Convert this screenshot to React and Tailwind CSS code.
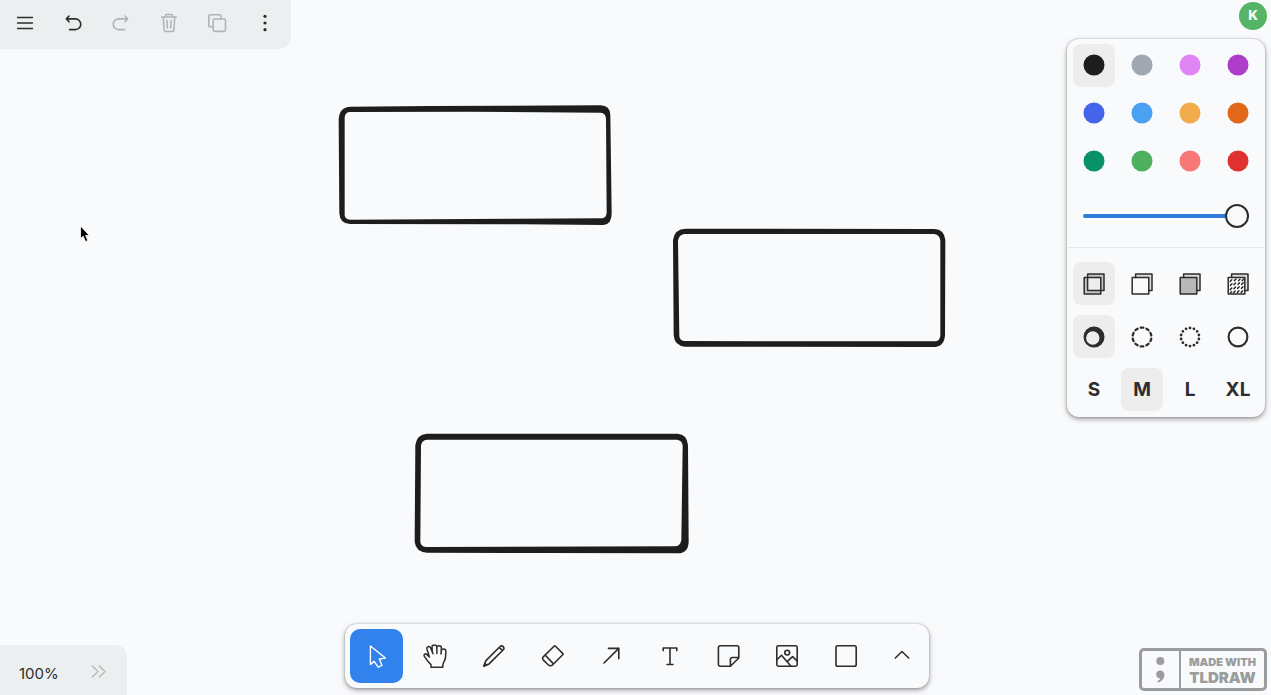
import React from "react";

const COLORS = [
  ["Black", "#1d1d1d"],
  ["Grey", "#9fa8b2"],
  ["Light violet", "#e085f4"],
  ["Violet", "#ae3ec9"],
  ["Blue", "#4465e9"],
  ["Light blue", "#4ba1f1"],
  ["Yellow", "#f1ac4b"],
  ["Orange", "#e16919"],
  ["Green", "#099268"],
  ["Light green", "#4cb05e"],
  ["Light red", "#f87777"],
  ["Red", "#e03131"],
];

function Icon({ children, width = 1.6 }) {
  return (
    <svg
      viewBox="0 0 24 24"
      className="size-6 shrink-0"
      fill="none"
      stroke="currentColor"
      strokeWidth={width}
      strokeLinecap="round"
      strokeLinejoin="round"
      aria-hidden="true"
    >
      {children}
    </svg>
  );
}

const UNDO = "M8 5 L5.4 7.9 L8 10.8 M5.6 7.9 H14.4 a5.3 5.3 0 0 1 0 10.7 H8.6";

const MENU = [
  ["Menu", false, <path strokeWidth="1.3" d="M4.5 6.5h15 M4.5 12h15 M4.5 17.5h15" />],
  ["Undo", false, <path d={UNDO} />],
  ["Redo", true, <path transform="matrix(-1 0 0 1 24 0)" d={UNDO} />],
  [
    "Delete",
    true,
    <path
      strokeWidth="1.5"
      d="M4.6 6h14.8 M8.6 6V4.6a1 1 0 0 1 1-1h4.8a1 1 0 0 1 1 1V6 M6.2 6l1 13.4a1.2 1.2 0 0 0 1.2 1.1h7.2a1.2 1.2 0 0 0 1.2-1.1L17.8 6 M9.9 9.6l.5 7.4 M14.1 9.6l-.5 7.4"
    />,
  ],
  [
    "Duplicate",
    true,
    <>
      <rect x="8.2" y="8" width="12.3" height="12.4" rx="1.6" />
      <path d="M8 15.8H5.3a1.5 1.5 0 0 1-1.5-1.5V5.3a1.5 1.5 0 0 1 1.5-1.5h9.2a1.5 1.5 0 0 1 1.5 1.5V7.8" />
    </>,
  ],
  [
    "More",
    false,
    <g fill="currentColor" stroke="none">
      <circle cx="12" cy="5.3" r="1.6" />
      <circle cx="12" cy="12" r="1.6" />
      <circle cx="12" cy="18.7" r="1.6" />
    </g>,
  ],
];

const TOOLS = [
  ["Select", <path d="M5.4 2 V20.4 L9.2 17.4 L13.2 23.2 L17 21.4 L14.4 15 L20.4 14 Z" strokeWidth="1.4" />],
  [
    "Hand",
    <path
      strokeWidth="1.5"
      d="M8 23.3 V20.6 C6 18.8 3.8 16.2 1.4 12.4 C.4 10.8 2.2 9 3.8 10.4 L6.4 13 L4 5.2 C3.3 2.6 6.6 1.6 7.6 4 L10 9.8 M9.4 8 L9 3 C9 .2 13.6 .2 13.8 3 L13.9 9.6 M13.8 3.6 C14 .9 18.4 1 18.4 3.9 L18 10 M18.4 6.4 C19.3 4.2 23 4.4 22.9 7.2 L22.5 13.6 C22.2 16.6 20 18.4 19.8 21 V23.3 H8"
    />,
  ],
  [
    "Draw",
    <>
      <path d="M2 21.9 L3.9 16.6 L18.1 2.5 C19 1.6 20.1 1.6 21.1 2.6 C22.2 3.7 22.2 4.9 21.3 5.8 L7.1 19.9 Z M17.3 3.4 L20.5 6.6" />
      <path d="M2 21.9 L2.8 19.4 L4.5 21.1 Z" fill="currentColor" />
    </>,
  ],
  [
    "Eraser",
    <path d="M14 2.2 a1 1 0 0 1 1.4 0 L22.7 9.4 a1 1 0 0 1 0 1.4 L13 20.5 C11.4 22.1 9.5 22.1 7.9 20.5 L3.7 16.4 C2.2 14.9 2.2 13.9 3.5 12.6 Z M5.3 11.2 L13.5 19.9" />,
  ],
  ["Arrow", <path d="M5 19 L19.8 4.4 M9.5 4.4 H19.8 V14.7" />],
  ["Text", <path d="M5.2 6.6 V4 H18.8 V6.6 M12 4 V20.5 M9 20.5 H15" />],
  [
    "Note",
    <path d="M22.8 13.4 V3.6 a1.8 1.8 0 0 0 -1.8 -1.8 H4.2 a1.8 1.8 0 0 0 -1.8 1.8 V20.4 a1.8 1.8 0 0 0 1.8 1.8 H14.4 L22.8 14 Z M22.600 13.5 H16.4 a2 2 0 0 0 -2 2 V22" />,
  ],
  [
    "Asset",
    <>
      <rect x="1.8" y="1.8" width="20.4" height="20.4" rx="1.6" />
      <circle cx="12.2" cy="8.6" r="2.4" />
      <path d="M2.1 15.5 L6.5 11.2 L15.8 22 M12.6 17.2 L17.6 12.6 L22 16.8" />
    </>,
  ],
  ["Rectangle", <rect x="2" y="1.8" width="20.2" height="20.4" rx="1.8" />],
];

const BACK = "M5.6 5.5 V2 H22 V18.6 H18.7";

const FILLS = [
  [
    "None",
    <>
      <path d="M2.2 5.5H5.6V2H22V18.6H18.8V22H2.2Z M5.6 5.5V18.6H18.8V5.5Z" fill="#c4c4c4" fillRule="evenodd" stroke="none" />
      <rect x="5.6" y="2" width="16.4" height="16.6" />
      <rect x="2.2" y="5.5" width="16.6" height="16.6" />
    </>,
  ],
  [
    "Semi",
    <>
      <path d="M5.6 5.5V2H22V18.6H18.8V5.5Z" fill="#dcdcdc" stroke="none" />
      <path d={BACK} />
      <rect x="2.2" y="5.5" width="16.6" height="16.6" />
    </>,
  ],
  [
    "Solid",
    <>
      <path d="M5.6 5.5V2H22V18.6H18.8V5.5Z" fill="#dcdcdc" stroke="none" />
      <path d={BACK} />
      <rect x="2.2" y="5.5" width="16.6" height="16.6" fill="#b8b8b8" />
    </>,
  ],
  [
    "Pattern",
    <>
      <path d="M5.6 5.5V2H22V18.6H18.8V5.5Z" fill="#dcdcdc" stroke="none" />
      <path d={BACK} />
      <rect x="2.2" y="5.5" width="16.6" height="16.6" fill="#fff" />
      <path
        strokeWidth="1.5"
        d="M4.2 9.4l1.6-1.6 M8.4 8.6l1.6-1.6 M12.4 8.800l1.600-1.600 M16.200 8.600l1.400-1.400 M4.400 13.400l1.600-1.600 M8 12.600l1.600-1.600 M12 12.400l1.600-1.600 M15.600 12.400l1.600-1.600 M4.200 17.600l1.600-1.600 M8 16.600l1.600-1.600 M11.600 16.400l1.600-1.600 M15.400 16.400l1.600-1.600 M4.400 21l1.200-1.200 M7.600 20.600l1.600-1.600 M11.400 20.400l1.600-1.600 M15.200 20.400l1.600-1.600"
      />
    </>,
  ],
];

const DASHES = [
  [
    "Draw",
    <path
      d="M12 1.5a10.5 10.5 0 1 0 0 21a10.5 10.5 0 1 0 0-21Z M10.8 6.300a6.700 6.700 0 1 1 0 13.400a6.700 6.700 0 1 1 0-13.400Z"
      fill="currentColor"
      fillRule="evenodd"
      stroke="none"
    />,
  ],
  [
    "Dashed",
    <circle cx="12" cy="12" r="9.4" strokeWidth="2.3" pathLength="100" strokeDasharray="4.5 5.5" strokeDashoffset="7.25" />,
  ],
  ["Dotted", <circle cx="12" cy="12" r="9.1" strokeWidth="2.8" pathLength="140" strokeDasharray="0 10" strokeDashoffset="5" />],
  ["Solid", <circle cx="12" cy="12" r="9.4" strokeWidth="2.1" />],
];

function OptionRow({ label, items, selected, height = "h-[53px]" }) {
  return (
    <div role="group" aria-label={label} className="grid grid-cols-4">
      {items.map(([name, content]) => (
        <div key={name} className={`flex items-center justify-center ${height}`}>
          <button
            type="button"
            aria-label={`${label}: ${name}`}
            aria-pressed={name === selected}
            className={`flex h-[43px] w-[42px] items-center justify-center rounded-lg ${name === selected ? "bg-[#ededed]" : ""}`}
          >
            {content}
          </button>
        </div>
      ))}
    </div>
  );
}

function StylePanel() {
  return (
    <section
      aria-label="Styles"
      className="mt-[9px] mr-1.5 w-[198px] rounded-xl bg-[#f9fafc] shadow-[0_0_2px_rgba(0,0,0,0.25),0_2px_4px_rgba(0,0,0,0.3),0_2px_8px_rgba(0,0,0,0.1)]"
    >
      <div className="border-b border-[#e8e9eb] px-[3px] pt-0.5">
        <OptionRow
          label="Color"
          selected="Black"
          height="h-12"
          items={COLORS.map(([name, color]) => [
            name,
            <Icon>
              <circle cx="12" cy="12" r="10.5" fill={color} stroke="none" />
            </Icon>,
          ])}
        />
        <div className="flex h-[62px] items-center px-[13px]">
          <input
            type="range"
            aria-label="Opacity"
            min="0"
            max="100"
            defaultValue="100"
            className="h-6 w-full appearance-none bg-transparent [&::-webkit-slider-runnable-track]:h-1 [&::-webkit-slider-runnable-track]:rounded-full [&::-webkit-slider-runnable-track]:bg-[#2f7adb] [&::-webkit-slider-thumb]:-mt-2.5 [&::-webkit-slider-thumb]:size-6 [&::-webkit-slider-thumb]:appearance-none [&::-webkit-slider-thumb]:rounded-full [&::-webkit-slider-thumb]:border-2 [&::-webkit-slider-thumb]:border-solid [&::-webkit-slider-thumb]:border-[#2d2d2d] [&::-webkit-slider-thumb]:bg-[#f9fafc]"
          />
        </div>
      </div>
      <div className="px-[3px] pt-[9px] pb-px">
        <OptionRow
          label="Fill"
          selected="None"
          items={FILLS.map(([name, art]) => [name, <Icon width={1.5}>{art}</Icon>])}
        />
        <OptionRow label="Dash" selected="Draw" items={DASHES.map(([name, art]) => [name, <Icon>{art}</Icon>])} />
        <OptionRow
          label="Size"
          selected="M"
          items={["S", "M", "L", "XL"].map((size) => [size, <span className="text-[19px] leading-6 font-bold">{size}</span>])}
        />
      </div>
    </section>
  );
}

function Canvas() {
  return (
    <div className="absolute inset-0 -z-10" aria-label="Canvas">
      <svg viewBox="0 0 870 420" className="absolute top-[95px] left-[330px] h-[140px] w-[290px]" fill="#1d1d1d" fillRule="evenodd">
        <path d="M62 35 L300 33 L520 32 L812 31 Q840 32 841 60 L845 355 Q845 389 820 390 L580 388 L60 387 Q30 387 28 355 L26 75 Q27 36 62 35Z M58 51 L420 50 L812 53 Q827 55 828 70 L830 352 Q829 368 818 370 L560 371 L60 374 Q45 373 44 360 L44 68 Q45 53 58 51Z" />
      </svg>
      <svg viewBox="0 0 870 405" className="absolute top-[220px] left-[665px] h-[135px] w-[290px]" fill="#1d1d1d" fillRule="evenodd">
        <path d="M62 26 L808 27 Q838 28 841 60 L840 345 Q838 380 808 381 L60 380 Q28 377 26 345 L24 60 Q28 27 62 26Z M58 42 L808 42 Q824 44 826 62 L826 348 Q824 362 812 364 L400 364 L58 363 Q44 361 43 348 L39 62 Q42 44 58 42Z" />
      </svg>
      <svg viewBox="0 0 870 405" className="absolute top-[425px] left-[405px] h-[135px] w-[290px]" fill="#1d1d1d" fillRule="evenodd">
        <path d="M66 26 L818 26 Q846 28 849 60 L851 350 Q850 384 820 385 L400 384 L66 383 Q32 380 29 350 L31 60 Q35 28 66 26Z M66 44 L816 44 Q832 46 833 62 L829 345 Q826 362 812 364 L62 366 Q47 363 46 350 L48 62 Q50 45 66 44Z" />
      </svg>
      <svg viewBox="0 0 12 20" className="absolute top-[224px] left-[79px] h-5 w-3">
        <path d="M1.5 2 V14.5 L4.2 12.2 L6.5 17.6 L8.8 16.6 L6.6 11.4 H10.3 Z" fill="#000" stroke="#fff" strokeWidth=".8" />
      </svg>
    </div>
  );
}

export default function App() {
  return (
    <main className="relative isolate flex min-h-screen flex-col justify-between overflow-hidden bg-[#f9fafc] font-['Inter',sans-serif] text-[#2d2d2d]">
      <Canvas />
      <header className="flex items-start justify-between">
        <nav aria-label="Actions" className="flex rounded-br-xl bg-[#ebeff0] pr-0.5 pb-[3px] pl-px">
          {MENU.map(([name, disabled, art]) => (
            <button
              key={name}
              type="button"
              aria-label={name}
              disabled={disabled}
              className={`flex h-[46px] w-12 items-center justify-center ${disabled ? "text-[#b0b3b4]" : ""}`}
            >
              <Icon>{art}</Icon>
            </button>
          ))}
        </nav>
        <div className="flex flex-col items-end pt-0.5">
          <button
            type="button"
            aria-label="User K"
            className="mr-1 flex size-7 items-center justify-center rounded-full bg-[#55b467] text-[13px] font-extrabold text-white"
          >
            K
          </button>
          <StylePanel />
        </div>
      </header>

      <footer className="grid grid-cols-[1fr_auto_1fr] items-end">
        <div className="flex h-[50px] w-[127px] items-center justify-between rounded-tr-xl bg-[#ebeff0] pt-2 pr-4 pl-[19px]">
          <button type="button" className="text-[15px] leading-5">
            100%
          </button>
          <button type="button" aria-label="Expand minimap" className="flex text-[#b8babb]">
            <Icon>
              <path d="M5.3 4 L11 9.5 L5.3 15 M12.3 4 L18 9.5 L12.3 15" strokeWidth="1.4" />
            </Icon>
          </button>
        </div>

        <div
          role="toolbar"
          aria-label="Tools"
          className="mb-[7px] ml-[3px] flex w-[584px] items-center justify-between rounded-xl bg-[#f9fafc] py-[5px] pr-[3px] pl-[5px] shadow-[0_0_2px_rgba(0,0,0,0.25),0_2px_4px_rgba(0,0,0,0.3),0_2px_8px_rgba(0,0,0,0.1)]"
        >
          {TOOLS.map(([name, art]) => (
            <button
              key={name}
              type="button"
              aria-label={name}
              aria-pressed={name === "Select"}
              className={`flex h-[54px] w-[53px] items-center justify-center rounded-[10px] ${name === "Select" ? "bg-[#3182ed] text-white" : ""}`}
            >
              <Icon>{art}</Icon>
            </button>
          ))}
          <button type="button" aria-label="More tools" className="flex h-[54px] w-12 items-center justify-center">
            <Icon>
              <path d="M5.3 14 L12 7.5 L18.7 14" />
            </Icon>
          </button>
        </div>

        <a
          href="#tldraw"
          className="mr-1 mb-1 flex h-[43px] w-32 items-stretch justify-self-end rounded-[5px] border-3 border-[#9b9c9d] text-[#9b9c9d]"
        >
          <svg viewBox="0 0 37 37" className="w-[37px] shrink-0" fill="currentColor" aria-hidden="true">
            <circle cx="18.3" cy="10" r="4" />
            <path d="M18.2 19.5a4 4 0 0 1 4.2 4.3c0 3.6-2.2 6.7-6.4 7.7l-.8-1.4c1.7-.6 2.8-1.5 3.1-2.6-2.3 0-4.1-1.6-4.1-4a4 4 0 0 1 4-4Z" />
          </svg>
          <span className="flex grow flex-col items-center justify-center border-l-2 border-[#9b9c9d]">
            <span className="text-[11px] leading-4 font-black">MADE WITH</span>
            <span className="text-[15px] leading-4 font-black">TLDRAW</span>
          </span>
        </a>
      </footer>
    </main>
  );
}
